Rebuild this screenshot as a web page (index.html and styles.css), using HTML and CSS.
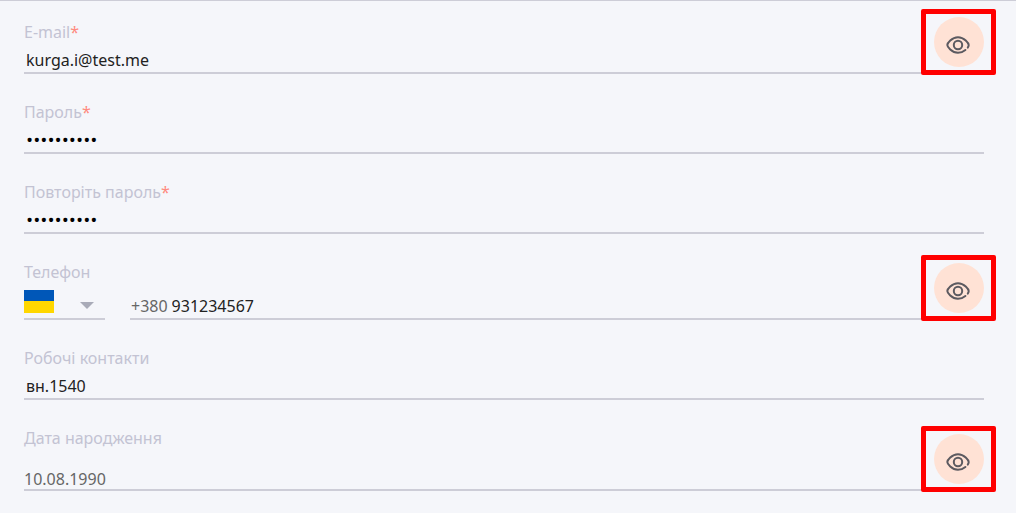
FILE: index.html
```html
<!DOCTYPE html>
<html lang="uk">
<head>
    <meta charset="UTF-8">
    <meta name="viewport" content="width=device-width, initial-scale=1.0">
    <title>Профіль</title>
    <link rel="stylesheet" href="styles.css">
</head>
<body>

    <!-- Eye icon shared by the visibility buttons -->
    <svg class="sprite" aria-hidden="true">
        <symbol id="eye" viewBox="0 0 24 18">
            <path d="M21.8 11.6 C22.4 10.6 22.7 9.8 22.7 9 C22.7 7.4 18.4 1.2 12 1.2 C5.6 1.2 1.3 7.4 1.3 9 C1.3 10.6 5.6 16.8 12 16.8 C15.4 16.8 17.6 15.5 19.4 14"/>
            <circle cx="12" cy="9" r="4.2"/>
        </symbol>
    </svg>

    <form class="profile-form">
        <div class="field">
            <label for="email">E-mail<span class="required">*</span></label>
            <input type="text" id="email" value="kurga.i@test.me">
            <div class="highlight">
                <button type="button" class="eye-button" aria-label="Видимість e-mail"><svg><use href="#eye"/></svg></button>
            </div>
        </div>

        <div class="field">
            <label for="password">Пароль<span class="required">*</span></label>
            <input type="password" id="password" value="qwerty1234">
        </div>

        <div class="field">
            <label for="repeat">Повторіть пароль<span class="required">*</span></label>
            <input type="password" id="repeat" value="qwerty1234">
        </div>

        <div class="field">
            <label for="phone">Телефон</label>
            <div class="phone-row">
                <button type="button" class="country" aria-label="Країна">
                    <span class="flag"></span>
                    <span class="arrow"></span>
                </button>
                <div class="phone-number">
                    <span class="prefix">+380</span>
                    <input type="tel" id="phone" value="931234567">
                </div>
            </div>
            <div class="highlight">
                <button type="button" class="eye-button" aria-label="Видимість телефону"><svg><use href="#eye"/></svg></button>
            </div>
        </div>

        <div class="field">
            <label for="contacts">Робочі контакти</label>
            <input type="text" id="contacts" value="вн.1540">
        </div>

        <div class="field">
            <label for="birthday">Дата народження</label>
            <input type="text" id="birthday" class="date" value="10.08.1990">
            <div class="highlight">
                <button type="button" class="eye-button" aria-label="Видимість дати народження"><svg><use href="#eye"/></svg></button>
            </div>
        </div>
    </form>

</body>
</html>
```
FILE: styles.css
```css
* {
    box-sizing: border-box;
}

body {
    margin: 0;
    background-color: #f5f6fa;
    border-top: 1px solid #cdcdd7;
    font-family: "Noto Sans", "Open Sans", sans-serif;
    font-size: 16px;
    color: #222;
}

.sprite {
    position: absolute;
    width: 0;
    height: 0;
}

.profile-form {
    display: flex;
    flex-direction: column;
    gap: 28px;
    padding: 21px 32px 22px 24px;
}

.field {
    display: flex;
    flex-direction: column;
    position: relative;
}

label {
    line-height: 20px;
    color: #c3c3d3;
}

.required {
    color: #ff8a80;
}

input {
    width: 100%;
    height: 32px;
    padding: 6px 2px 0;
    background: none;
    border: none;
    border-bottom: 2px solid #cdcdd7;
    border-radius: 0;
    outline: none;
    font: inherit;
    color: #222;
}

input[type="password"] {
    font-family: "Open Sans", sans-serif;
    font-size: 19px;
    color: #000;
}

input.date {
    height: 43px;
    padding: 20px 0 0;
    color: #666;
}

/* Phone */
.phone-row {
    display: flex;
    gap: 25px;
}

.country {
    display: flex;
    justify-content: space-between;
    width: 81px;
    height: 38px;
    padding: 8px 11px 0 0;
    background: none;
    border: none;
    border-bottom: 2px solid #cdcdd7;
    cursor: pointer;
}

.flag {
    width: 30px;
    height: 23px;
    background: linear-gradient(#0057b8 50%, #ffd700 50%);
}

.arrow {
    margin-top: 12px;
    border: 7px solid transparent;
    border-top-color: #a9abb8;
    border-bottom: none;
}

.phone-number {
    flex: 1;
    display: flex;
    align-items: center;
    height: 38px;
    padding-top: 12px;
    border-bottom: 2px solid #cdcdd7;
}

.prefix {
    padding-left: 1px;
    color: #666;
}

.phone-number input {
    flex: 1;
    height: 24px;
    padding: 0 4px;
    border: none;
}

/* Visibility buttons */
.highlight {
    position: absolute;
    right: -12px;
    bottom: -1px;
    display: flex;
    justify-content: center;
    align-items: center;
    width: 75px;
    height: 66px;
    background-color: #f5f6fa;
    border: 5px solid #f00;
    border-radius: 2px;
}

.eye-button {
    display: flex;
    justify-content: center;
    align-items: center;
    width: 50px;
    height: 50px;
    padding: 6px 1px 0 0;
    background-color: #ffe2d5;
    border: none;
    border-radius: 50%;
    cursor: pointer;
}

.eye-button svg {
    width: 24px;
    height: 18px;
    fill: none;
    stroke: #5c5a60;
    stroke-width: 2;
    stroke-linecap: round;
}
```
